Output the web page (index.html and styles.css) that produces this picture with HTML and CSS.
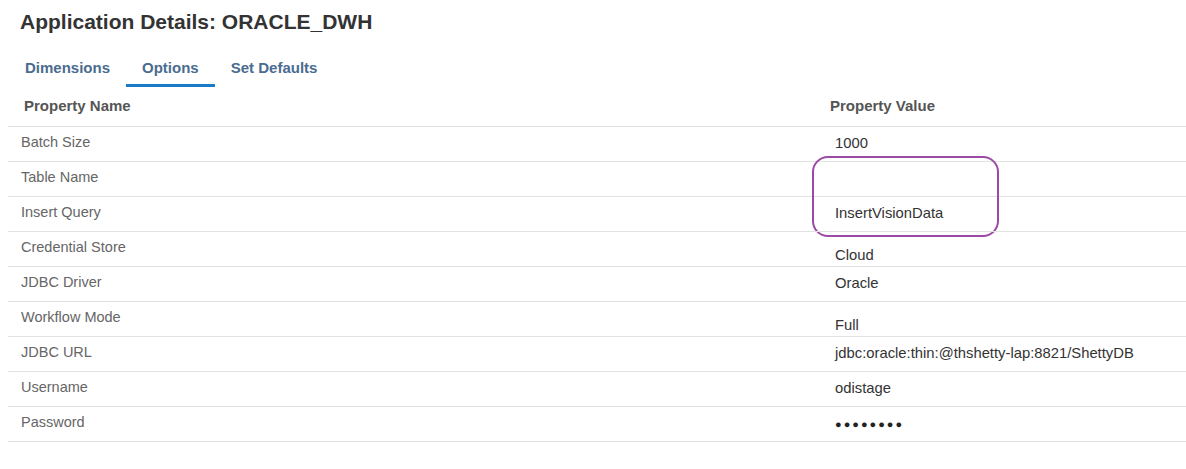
FILE: index.html
```html
<!DOCTYPE html>
<html>
<head>
<meta charset="utf-8">
<link rel="stylesheet" href="styles.css">
</head>
<body>
<div class="page">
  <h1 class="title">Application Details: ORACLE_DWH</h1>
  <nav class="tabs">
    <span class="tab">Dimensions</span>
    <span class="tab active">Options</span>
    <span class="tab">Set Defaults</span>
  </nav>
  <div class="table">
    <div class="row head">
      <div class="cell name">Property Name</div>
      <div class="cell value">Property Value</div>
    </div>
    <div class="row">
      <div class="cell name">Batch Size</div>
      <div class="cell value">1000</div>
    </div>
    <div class="row hl-anchor">
      <div class="cell name">Table Name</div>
      <div class="cell value"></div>
      <div class="highlight"></div>
    </div>
    <div class="row">
      <div class="cell name">Insert Query</div>
      <div class="cell value">InsertVisionData</div>
    </div>
    <div class="row">
      <div class="cell name">Credential Store</div>
      <div class="cell value low">Cloud</div>
    </div>
    <div class="row">
      <div class="cell name">JDBC Driver</div>
      <div class="cell value">Oracle</div>
    </div>
    <div class="row">
      <div class="cell name">Workflow Mode</div>
      <div class="cell value low">Full</div>
    </div>
    <div class="row">
      <div class="cell name">JDBC URL</div>
      <div class="cell value">jdbc:oracle:thin:@thshetty-lap:8821/ShettyDB</div>
    </div>
    <div class="row">
      <div class="cell name">Username</div>
      <div class="cell value">odistage</div>
    </div>
    <div class="row">
      <div class="cell name">Password</div>
      <div class="cell value dots">●●●●●●●●</div>
    </div>
  </div>
</div>
</body>
</html>
```
FILE: styles.css
```css
* { box-sizing: border-box; }
html, body { margin: 0; padding: 0; background: #fff; }
body { font-family: "Liberation Sans", Arial, sans-serif; color: #333; }
.page { padding: 0 0 0 8px; }
.title {
  margin: 0;
  padding: 10px 0 0 12px;
  font-size: 21px;
  line-height: 24px;
  font-weight: bold;
  color: #333;
}
.tabs {
  display: flex;
  margin-top: 24px;
  padding-left: 1px;
}
.tab {
  padding: 1px 16px 0;
  font-size: 15px;
  line-height: 18px;
  font-weight: bold;
  color: #4a6c90;
  height: 29px;
  border-bottom: 3px solid transparent;
}
.tab.active { border-bottom-color: #1a7bc8; }
.table { display: flex; flex-direction: column; }
.row {
  display: grid;
  grid-template-columns: 808px 1fr;
  height: 35px;
  border-bottom: 1px solid #e2e2e2;
  position: relative;
  font-size: 14.5px;
  line-height: 20px;
}
.row.head { height: 40px; }
.cell { padding-top: 5px; }
.cell.name { padding-left: 13px; color: #666; }
.cell.value { padding-left: 19px; padding-top: 6px; color: #333; font-size: 14.8px; }
.cell.value.low { padding-top: 13px; }
.head .cell { font-size: 15px; font-weight: bold; color: #555; padding-top: 9px; }
.head .cell.name { padding-left: 16px; }
.head .cell.value { padding-left: 14px; }
.cell.value.dots { font-size: 11px; letter-spacing: 2px; color: #222; padding-top: 7px; }
.highlight {
  position: absolute;
  left: 804px;
  top: -6px;
  width: 187px;
  height: 81px;
  border: 2px solid #9b4aa5;
  border-radius: 16px;
  pointer-events: none;
}
```
